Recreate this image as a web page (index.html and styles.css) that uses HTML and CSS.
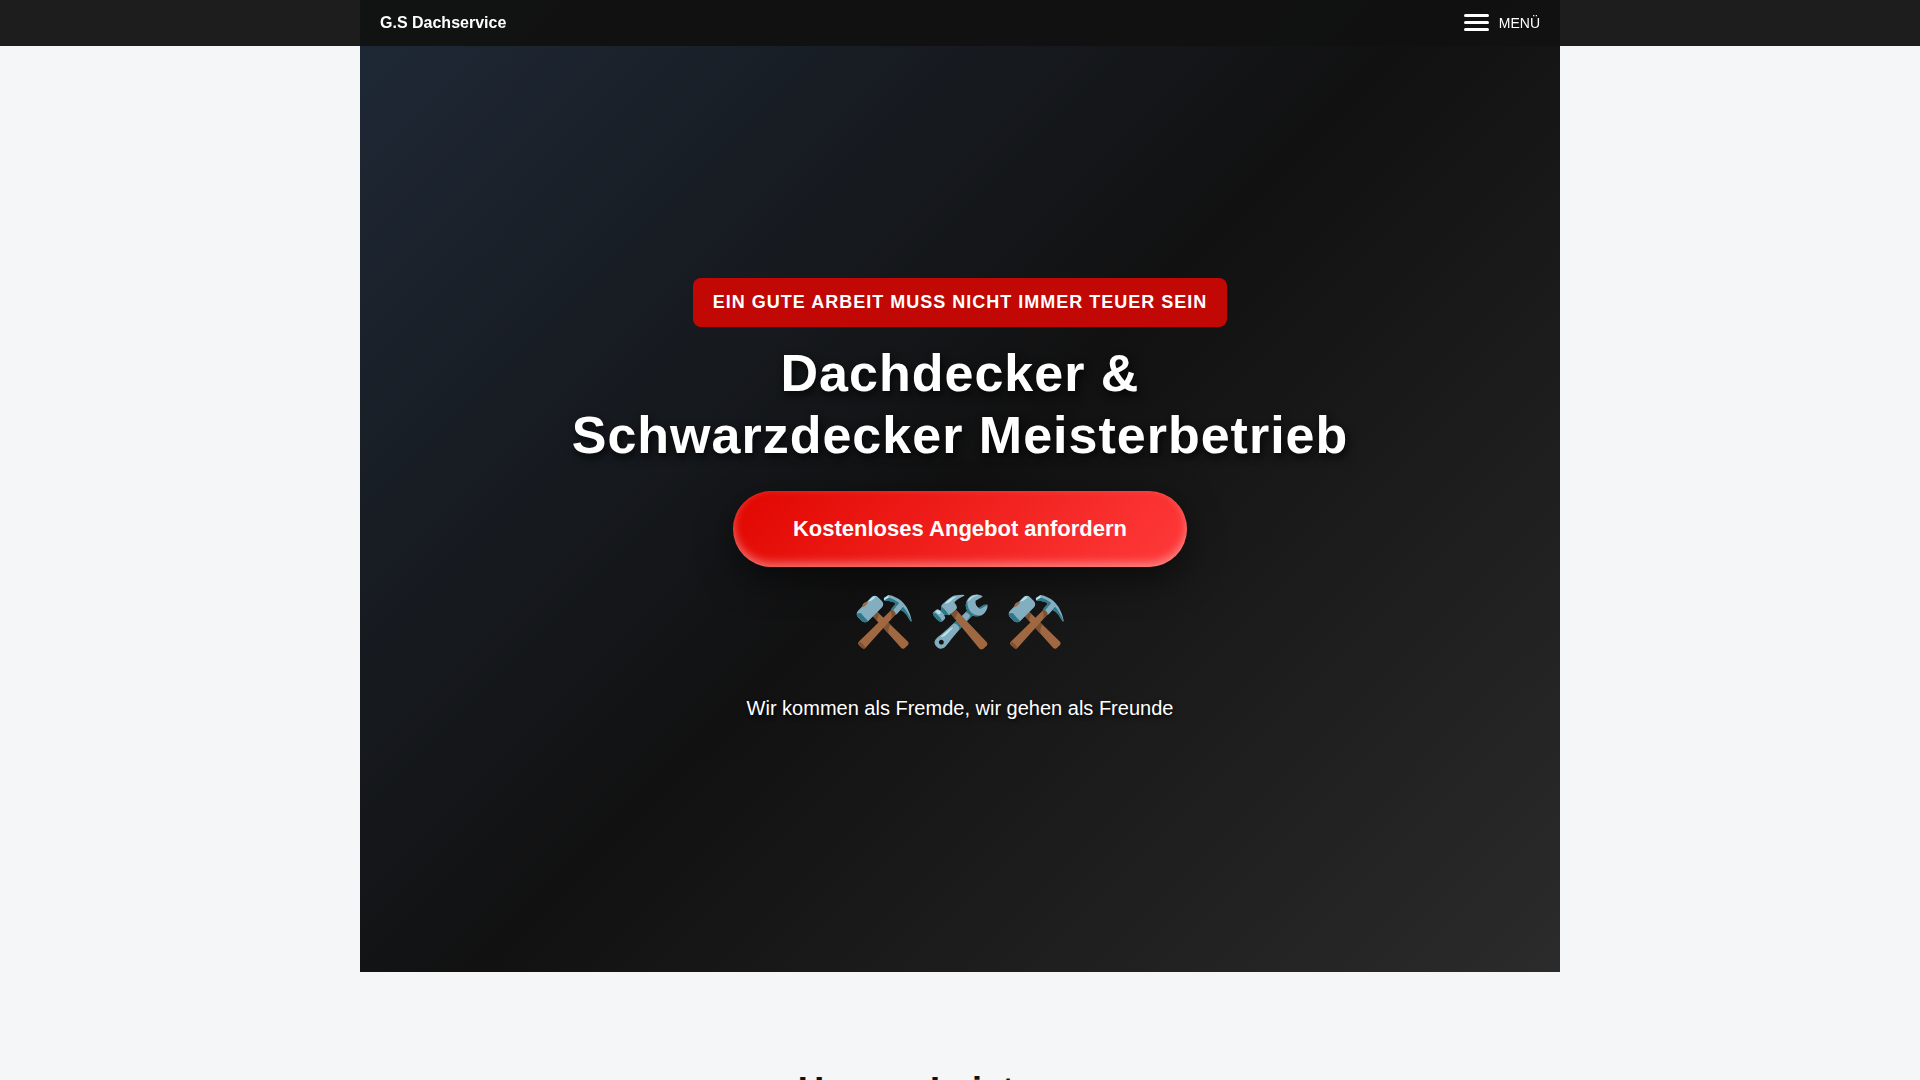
FILE: index.html
```html
<!DOCTYPE html>
<html lang="de">
<head>
<meta charset="utf-8">
<title>G.S Dachservice</title>
<link rel="stylesheet" href="styles.css">
</head>
<body>
<header class="topbar">
  <div class="topbar-inner">
    <strong class="brand">G.S Dachservice</strong>
    <button class="menu-button" type="button">
      <span class="burger"><span></span><span></span><span></span></span>
      MENÜ
    </button>
  </div>
</header>
<main class="page">
  <section class="hero">
    <p class="badge">EIN GUTE ARBEIT MUSS NICHT IMMER TEUER SEIN</p>
    <h1 class="hero-title">Dachdecker &amp;<br>Schwarzdecker Meisterbetrieb</h1>
    <a class="cta" href="#kontakt">Kostenloses Angebot anfordern</a>
    <div class="tools">⚒️ 🛠️ ⚒️</div>
    <p class="slogan">Wir kommen als Fremde, wir gehen als Freunde</p>
  </section>
  <section class="services">
    <h2 class="section-title">Unsere Leistungen</h2>
  </section>
</main>
</body>
</html>
```
FILE: styles.css
```css
* { box-sizing: border-box; }
body {
  margin: 0;
  background: #f4f6f8;
  color: #111;
  font-family: "Liberation Sans", Arial, sans-serif;
}
.topbar {
  position: fixed;
  top: 0;
  left: 0;
  right: 0;
  z-index: 10;
  background: rgba(17, 17, 17, 0.95);
  color: #fff;
}
.topbar-inner {
  display: flex;
  align-items: center;
  justify-content: space-between;
  max-width: 1200px;
  height: 46px;
  margin: 0 auto;
  padding: 0 20px;
}
.brand { font-size: 16px; }
.menu-button {
  display: flex;
  align-items: flex-start;
  gap: 10px;
  padding: 0;
  border: 0;
  background: none;
  color: #fff;
  font: 14px/18px "Liberation Sans", Arial, sans-serif;
  cursor: pointer;
}
.burger {
  display: flex;
  flex-direction: column;
  gap: 4px;
  width: 25px;
}
.burger span {
  height: 3px;
  border-radius: 2px;
  background: #fff;
}
.page { max-width: 1200px; margin: 0 auto; }
.hero {
  display: flex;
  flex-direction: column;
  align-items: center;
  justify-content: center;
  min-height: 90vh;
  padding: 47px 20px 20px;
  background: linear-gradient(135deg, #1f2937, #111 50%, #2b2b2b);
  color: #fff;
  text-align: center;
}
.badge {
  margin: 0 0 15px;
  padding: 14px 20px;
  border-radius: 8px;
  background: #c20804;
  font-size: 18px;
  font-weight: bold;
  line-height: 21px;
  letter-spacing: 1px;
}
.hero-title {
  margin: 0 0 25px;
  font-size: 52px;
  line-height: 62px;
  letter-spacing: 1px;
  text-shadow: 2px 4px 8px rgba(0, 0, 0, 0.8);
}
.cta {
  padding: 25px 60px;
  border-radius: 50px;
  background: linear-gradient(135deg, #e10600, #ff3b3b);
  box-shadow: 0 12px 35px rgba(0, 0, 0, 0.5), inset 0 -4px 10px rgba(255, 255, 255, 0.4);
  color: #fff;
  font-size: 22px;
  font-weight: bold;
  line-height: 26px;
  text-decoration: none;
}
.tools { margin: 20px 0 0; font-size: 50px; line-height: 70px; }
.slogan {
  margin: 38px 0 0;
  font-size: 20px;
  line-height: 26px;
  text-shadow: 1px 2px 4px rgba(0, 0, 0, 0.8);
}
.services { padding: 98px 20px; text-align: center; }
.section-title { margin: 0; font-size: 36px; line-height: 42px; }
```
